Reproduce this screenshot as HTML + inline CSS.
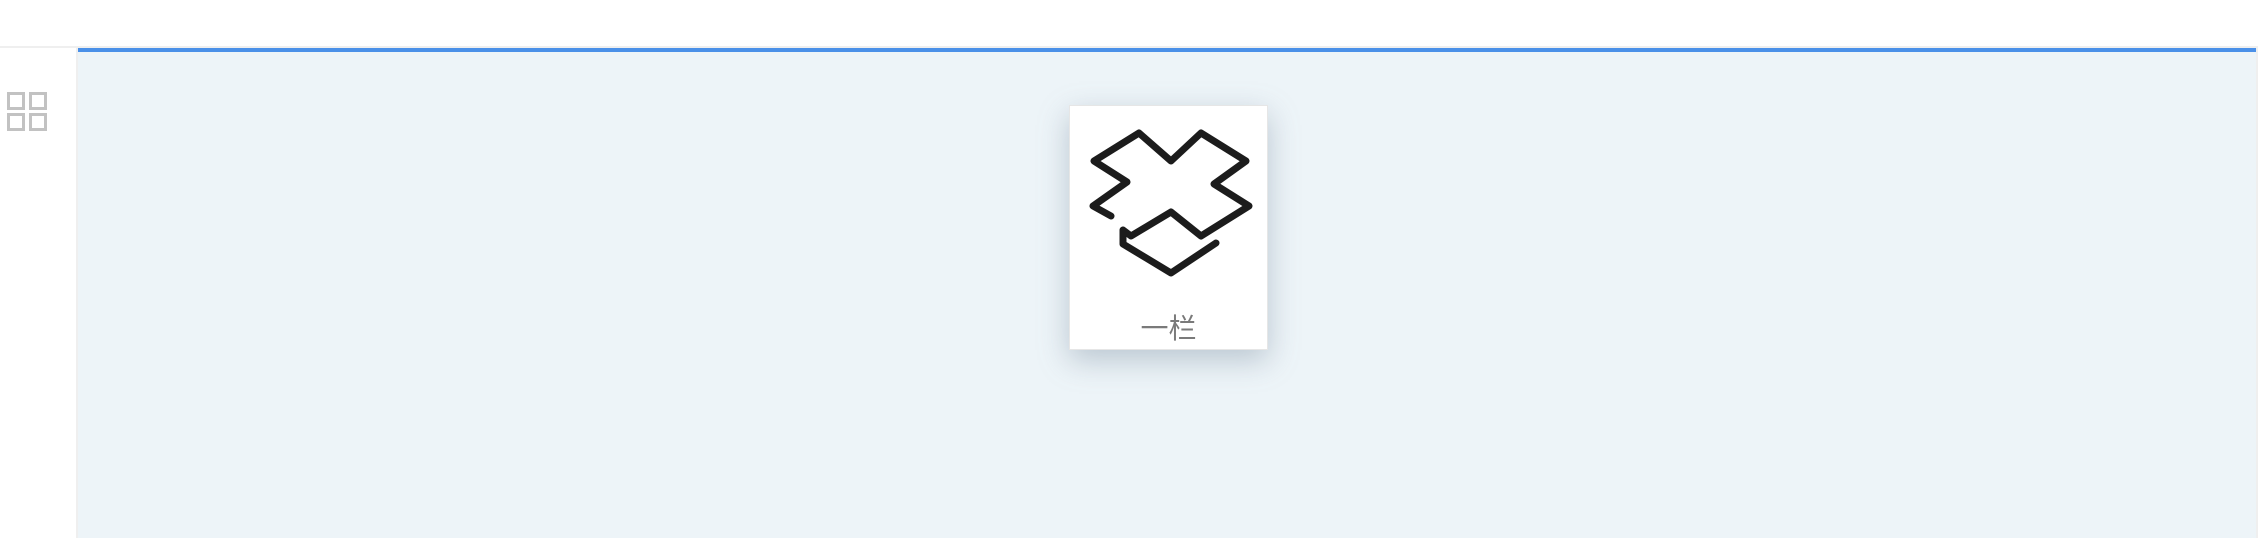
<!DOCTYPE html>
<html><head><meta charset="utf-8"><style>
html,body{margin:0;padding:0;background:#fff;width:2258px;height:538px;overflow:hidden;position:relative;font-family:"Liberation Sans","Noto Sans CJK SC",sans-serif}
.topline{position:absolute;left:0;top:46px;width:2258px;height:2px;background:#efefef}
.leftb{position:absolute;left:76px;top:48px;width:2px;height:490px;background:#efefef}
.rightb{position:absolute;left:2256px;top:48px;width:2px;height:490px;background:#efefef}
.panel{position:absolute;left:78px;top:48px;width:2178px;height:490px;background:#edf4f8}
.blue{position:absolute;left:78px;top:48px;width:2178px;height:4px;background:#4a90e8}
.sq{position:absolute;width:12px;height:12px;border:3px solid #c2c2c2}
.card{position:absolute;left:1069px;top:105px;width:199px;height:245px;background:#fff;border:1px solid #e6e6e6;box-sizing:border-box;box-shadow:0 10px 28px rgba(110,130,150,.4)}
.lbl{position:absolute;left:0;width:100%;top:206px;text-align:center;font-size:28px;color:#7a7a7a;line-height:34px}
</style></head><body>
<div class="topline"></div>
<div class="leftb"></div>
<div class="rightb"></div>
<div class="panel"></div>
<div class="blue"></div>
<div class="sq" style="left:7px;top:92px"></div>
<div class="sq" style="left:29px;top:92px"></div>
<div class="sq" style="left:7px;top:113px"></div>
<div class="sq" style="left:29px;top:113px"></div>
<div class="card">
<svg width="199" height="200" style="position:absolute;left:0;top:0" fill="none" stroke="#1c1c1c" stroke-width="7" stroke-linejoin="round" stroke-linecap="round">
<path d="M41 110 L23 100 L57 76 L24 55 L69 27 L101 55 L131 27 L176 55 L144 78 L179 100 L131 130 L101 106 L61 130 L53 124 L53 138 L101 167 L146 137"/>
</svg>
<div class="lbl">一栏</div>
</div>
</body></html>
